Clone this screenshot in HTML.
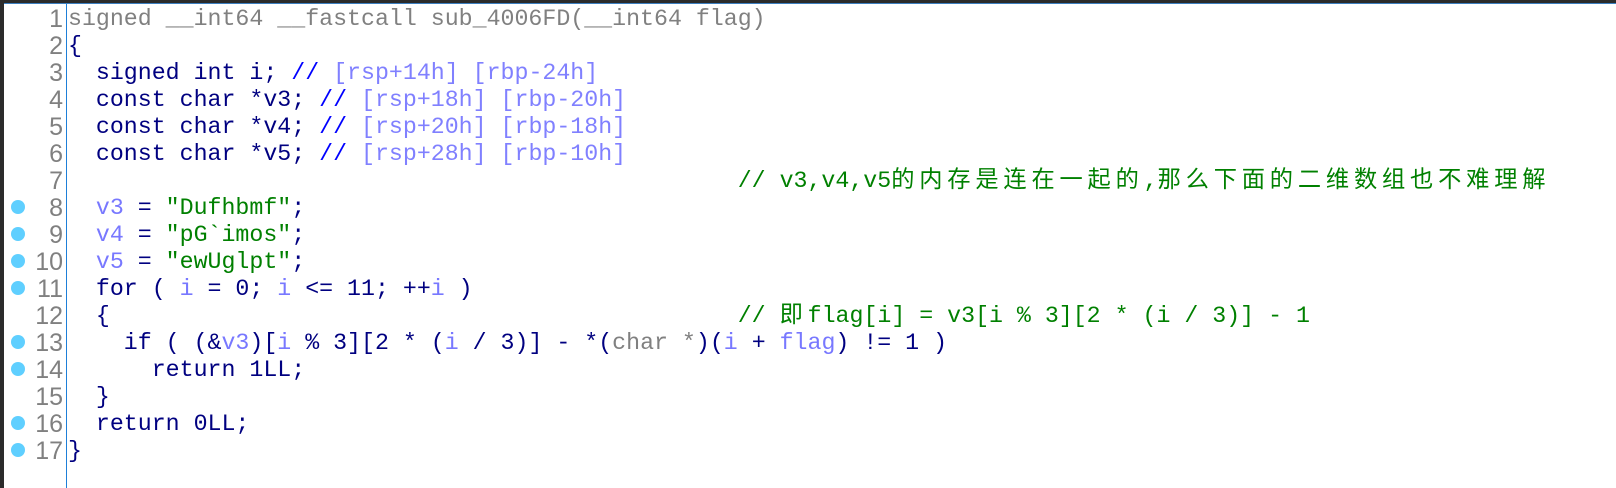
<!DOCTYPE html>
<html><head><meta charset="utf-8"><style>
body{margin:0;width:1616px;height:488px;background:#fff;overflow:hidden;position:relative;font-family:"Liberation Mono","Noto Sans CJK SC",monospace;}
.top{position:absolute;left:0;top:0;width:1616px;height:3px;background:#2b2b2b;}
.top2{position:absolute;left:0;top:3px;width:1616px;height:1px;background:#3c7fc0;}
.lb{position:absolute;left:0;top:0;width:4px;height:488px;background:#2b2b2b;}
.vl{position:absolute;left:66px;top:4px;width:1px;height:484px;background:#1e7fd8;}
.ln{position:absolute;left:0;width:63px;text-align:right;font-size:25px;color:#808080;line-height:27px;font-family:"Liberation Sans",sans-serif;}
.dot{position:absolute;left:11px;width:14px;height:14px;border-radius:50%;background:#5fcfff;}
pre{position:absolute;left:68px;top:6px;margin:0;font-size:23.25px;line-height:27px;color:#000080;font-family:"Liberation Mono","Noto Sans CJK SC",monospace;}
.g{color:#808080}.v{color:#7878ff}.c{color:#8080ff}.s{color:#008000}.k{color:#0000ff}.z{letter-spacing:4.8px}
</style></head><body>
<div class="top"></div><div class="top2"></div><div class="lb"></div><div class="vl"></div>
<div class="ln" style="top:6px">1<br>2<br>3<br>4<br>5<br>6<br>7<br>8<br>9<br>10<br>11<br>12<br>13<br>14<br>15<br>16<br>17</div>
<div class="dot" style="top:200px"></div><div class="dot" style="top:227px"></div><div class="dot" style="top:254px"></div><div class="dot" style="top:281px"></div><div class="dot" style="top:335px"></div><div class="dot" style="top:362px"></div><div class="dot" style="top:416px"></div><div class="dot" style="top:443px"></div>
<pre><span class="g">signed __int64 __fastcall sub_4006FD(__int64 flag)</span>
{
  signed int i; <span class="k">//</span> <span class="c">[rsp+14h] [rbp-24h]</span>
  const char *v3; <span class="k">//</span> <span class="c">[rsp+18h] [rbp-20h]</span>
  const char *v4; <span class="k">//</span> <span class="c">[rsp+20h] [rbp-18h]</span>
  const char *v5; <span class="k">//</span> <span class="c">[rsp+28h] [rbp-10h]</span>
<span class="s">                                                // v3,v4,v5<span class="z">的内存是连在一起的</span>,<span class="z">那么下面的二维数组也不难理解</span></span>
  <span class="v">v3</span> = <span class="s">"Dufhbmf"</span>;
  <span class="v">v4</span> = <span class="s">"pG`imos"</span>;
  <span class="v">v5</span> = <span class="s">"ewUglpt"</span>;
  for ( <span class="v">i</span> = 0; <span class="v">i</span> &lt;= 11; ++<span class="v">i</span> )
  {                                             <span class="s">// <span class="z">即</span>flag[i] = v3[i % 3][2 * (i / 3)] - 1</span>
    if ( (&amp;<span class="v">v3</span>)[<span class="v">i</span> % 3][2 * (<span class="v">i</span> / 3)] - *(<span class="g">char *</span>)(<span class="v">i</span> + <span class="v">flag</span>) != 1 )
      return 1LL;
  }
  return 0LL;
}</pre>
</body></html>
